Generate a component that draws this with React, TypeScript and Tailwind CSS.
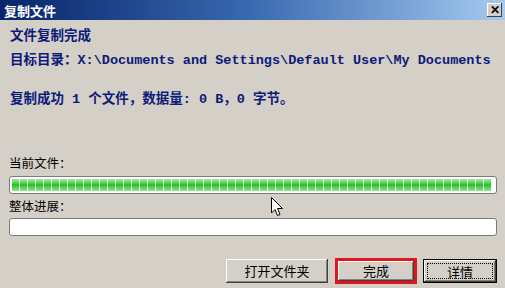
import React from 'react';

const cjkMono = { fontFamily: '"Liberation Mono", "Noto Sans CJK SC", monospace' };
const cjkSans = { fontFamily: '"Noto Sans CJK SC", "Liberation Sans", sans-serif' };

const btn =
  'h-[24px] bg-[#d4d0c8] text-[13px] text-black flex items-center justify-center shadow-[inset_-1px_-1px_#404040,inset_1px_1px_#ffffff,inset_-2px_-2px_#808080]';

const Bar = ({ filled }: { filled: boolean }) => (
  <div className="h-[18px] w-[488px] rounded-[3px] border border-[#7a7a7a] bg-white p-[2px] flex">
    {filled && (
      <div className="flex gap-[1px] overflow-hidden">
        {Array.from({ length: 60 }).map((_, i) => (
          <div key={i} className="w-[7px] h-full shrink-0 bg-gradient-to-b from-[#9cec9c] via-[#14c414] to-[#8ae88a]" />
        ))}
      </div>
    )}
  </div>
);

export default function App() {
  return (
    <div className="relative w-[505px] h-[288px] overflow-hidden bg-[#d4d0c8]" style={cjkSans}>
      {/* title bar */}
      <div className="h-[20px] flex items-center justify-between pl-[4px] pr-[3px] bg-gradient-to-r from-[#0a246a] via-[#3a6ab0] to-[#a6caf0]">
        <span className="text-white font-bold text-[13px] leading-none">复制文件</span>
        <div className="w-[15px] h-[14px] flex items-center justify-center bg-[#d4d0c8] shadow-[inset_-1px_-1px_#404040,inset_1px_1px_#ffffff] text-[12px] font-bold leading-none text-black" style={{ fontFamily: '"Liberation Sans", sans-serif' }}>
          ✕
        </div>
      </div>

      <div className="pl-[9px] pr-[8px]">
        <div className="mt-[7px] ml-[1px] h-[20px] leading-[20px] text-[13.5px] font-bold text-[#0c1a78]" style={cjkMono}>
          文件复制完成
        </div>
        <div className="mt-[4px] ml-[1px] h-[20px] leading-[20px] text-[13.5px] font-bold text-[#0c1a78] whitespace-nowrap" style={cjkMono}>
          目标目录：X:\Documents and Settings\Default User\My Documents
        </div>
        <div className="mt-[19px] ml-[1px] h-[20px] leading-[20px] text-[13.5px] font-bold text-[#0c1a78] whitespace-nowrap" style={cjkMono}>
          复制成功 1 个文件，数据量: 0 B，0 字节。
        </div>

        <div className="mt-[45px] h-[16px] leading-[16px] text-[12.5px] text-black">当前文件：</div>
        <div className="mt-[5px]">
          <Bar filled />
        </div>
        <div className="mt-[4px] h-[16px] leading-[16px] text-[12.5px] text-black">整体进展：</div>
        <div className="mt-[4px]">
          <Bar filled={false} />
        </div>

        <div className="mt-[22px] flex justify-end items-center">
          <div className={`${btn} w-[102px]`}>打开文件夹</div>
          <div className="ml-[7px] w-[82px] h-[26px] border-[3px] border-[#e0161e] flex">
            <div className={`${btn} w-full h-full`}>完成</div>
          </div>
          <div className="ml-[6px] w-[74px] h-[24px] border border-black">
            <div className="w-full h-full flex items-center justify-center bg-[#d4d0c8] shadow-[inset_-1px_-1px_#404040,inset_1px_1px_#ffffff,inset_-2px_-2px_#808080] p-[3px]">
              <div className="w-full h-full border border-dotted border-black flex items-center justify-center text-[13px] leading-none">
                详情
              </div>
            </div>
          </div>
        </div>
      </div>

      {/* mouse pointer */}
      <svg className="absolute left-[271px] top-[197px]" width="13" height="20" viewBox="0 0 13 20">
        <path d="M0.5 0.5 L0.5 16 L4 12.5 L6.5 18.5 L9 17.5 L6.5 11.5 L11.5 11.5 Z" fill="#ffffff" stroke="#000000" strokeWidth="1" />
      </svg>
    </div>
  );
}
